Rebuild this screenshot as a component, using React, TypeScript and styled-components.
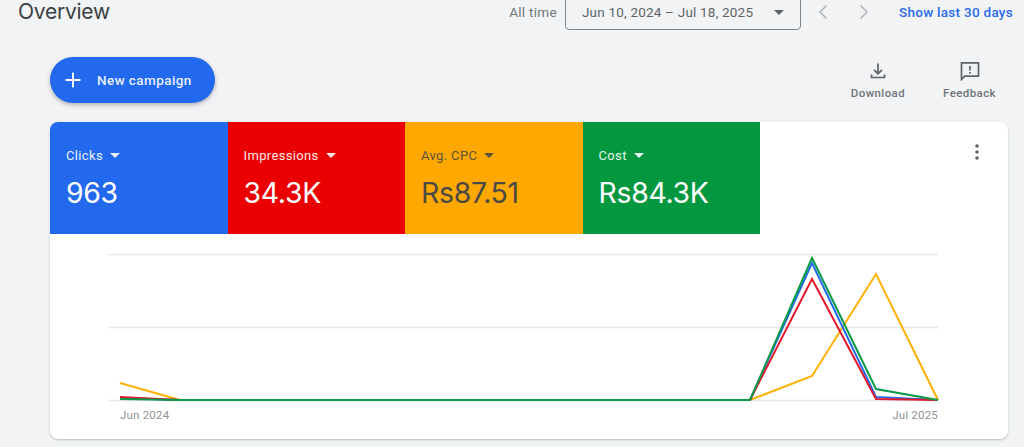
import React from "react";
import styled, { createGlobalStyle } from "styled-components";

const Global = createGlobalStyle`
  html, body { margin: 0; padding: 0; background: #f1f3f5; }
  body { width: 1024px; height: 447px; overflow: hidden; font-family: Roboto, "Liberation Sans", sans-serif; }
`;

const Page = styled.div`
  width: 1024px;
  height: 447px;
  overflow: hidden;
  background: #f1f3f5;
  display: flex;
  flex-direction: column;
`;

const TopBar = styled.header`
  display: flex;
  align-items: center;
  height: 24px;
  flex: none;
  padding: 0 11px 0 18px;
`;

const Title = styled.h1`
  margin: 0;
  flex: 1;
  font: 400 21px/24px Inter, Roboto, sans-serif;
  letter-spacing: -0.25px;
  color: #3c4043;
`;

const RangeLabel = styled.span`
  font-size: 13.5px;
  letter-spacing: 0.3px;
  color: #70757a;
  margin-right: 8px;
`;

const DateBox = styled.div`
  box-sizing: border-box;
  flex: none;
  width: 236px;
  height: 36px;
  border: 1px solid #80868b;
  border-radius: 4px;
  display: flex;
  align-items: center;
  justify-content: space-between;
  padding: 0 16px;
  font-size: 13.5px;
  letter-spacing: 0.2px;
  color: #5f6368;
`;

const Arrow = styled.span<{ $color: string }>`
  display: block;
  width: 0;
  height: 0;
  border-left: 5px solid transparent;
  border-right: 5px solid transparent;
  border-top: 5px solid ${(p) => p.$color};
`;

const Pager = styled.div`
  display: flex;
  gap: 23px;
  margin: 0 26px 0 13px;
  color: #b3b6ba;
`;

const LinkText = styled.a`
  font-size: 13.5px;
  font-weight: 500;
  letter-spacing: 0.28px;
  color: #2a6ae8;
`;

const ActionRow = styled.div`
  display: flex;
  flex: none;
  align-items: flex-start;
  padding: 33px 28px 0 50px;
  height: 65px;
`;

const NewButton = styled.button`
  display: flex;
  align-items: center;
  gap: 15px;
  width: 165px;
  height: 46px;
  border: 0;
  border-radius: 23px;
  padding: 0 0 0 14px;
  background: #2269ee;
  color: #e6eefd;
  font: 500 13.5px Roboto, sans-serif;
  letter-spacing: 0.42px;
  box-shadow: 0 2px 4px rgba(60, 64, 67, 0.35);
`;

const Tools = styled.div`
  margin-left: auto;
  display: flex;
  gap: 38px;
  margin-top: 4px;
`;

const Tool = styled.div`
  display: flex;
  flex-direction: column;
  align-items: center;
  gap: 5px;
  font-size: 11.5px;
  font-weight: 500;
  letter-spacing: 0.4px;
  color: #70757a;
`;

const Card = styled.section`
  margin-left: 50px;
  width: 958px;
  height: 317px;
  flex: none;
  background: #fff;
  border-radius: 8px;
  overflow: hidden;
  box-shadow: 0 1px 2px rgba(60, 64, 67, 0.3);
  position: relative;
`;

const Tiles = styled.div`
  display: flex;
  height: 112px;
`;

const Tile = styled.div<{ $bg: string; $fg: string }>`
  box-sizing: border-box;
  width: 177.5px;
  background: ${(p) => p.$bg};
  color: ${(p) => p.$fg};
  padding: 25px 16px 0;
`;

const TileLabel = styled.div`
  display: flex;
  align-items: center;
  gap: 7px;
  height: 16px;
  font-size: 13px;
  letter-spacing: 0.35px;
  opacity: 0.9;
`;

const TileValue = styled.div`
  margin-top: 13px;
  font: 400 28.4px Inter, Roboto, sans-serif;
  line-height: 34px;
  letter-spacing: -0.3px;
`;

const Kebab = styled.span`
  position: absolute;
  right: 29px;
  top: 22px;
  color: #5f6368;
  line-height: 0;
`;

const Plot = styled.svg`
  display: block;
  width: 958px;
  height: 205px;
`;

const AxisText = styled.text`
  font: 400 11.5px Roboto, sans-serif;
  letter-spacing: 0.2px;
  fill: #8f9397;
`;

const tiles = [
  { label: "Clicks", value: "963", bg: "#2269ee", fg: "#ffffff" },
  { label: "Impressions", value: "34.3K", bg: "#ea0000", fg: "#ffffff" },
  { label: "Avg. CPC", value: "Rs87.51", bg: "#ffa800", fg: "#4a4a45" },
  { label: "Cost", value: "Rs84.3K", bg: "#03973f", fg: "#ffffff" },
];

// page coordinates, shifted into the plot's own box
const line = (pts: [number, number][]) =>
  pts.map(([x, y]) => `${x - 50},${y - 234}`).join(" ");

const series = [
  { color: "#ffb000", pts: [[120, 383], [180, 400], [750, 400], [812, 376], [876, 274], [938, 400]] },
  { color: "#2269ee", pts: [[120, 398], [180, 400], [750, 400], [812, 263], [876, 397], [938, 400]] },
  { color: "#e01a2b", pts: [[120, 397], [180, 400], [750, 400], [812, 279], [876, 399], [938, 400]] },
  { color: "#0b9a4a", pts: [[120, 399], [180, 400], [750, 400], [812, 258], [876, 389], [938, 400]] },
] as { color: string; pts: [number, number][] }[];

export default function App() {
  return (
    <Page>
      <Global />
      <TopBar>
        <Title>Overview</Title>
        <RangeLabel>All time</RangeLabel>
        <DateBox>
          Jun 10, 2024 – Jul 18, 2025
          <Arrow $color="#5f6368" />
        </DateBox>
        <Pager>
          <svg width="18" height="18" viewBox="0 0 18 18" fill="none" stroke="currentColor" strokeWidth="1.6">
            <path d="M12.500 2.500 6 9l6.500 6.500" />
          </svg>
          <svg width="18" height="18" viewBox="0 0 18 18" fill="none" stroke="currentColor" strokeWidth="1.6">
            <path d="M5.500 2.500 12 9l-6.500 6.500" />
          </svg>
        </Pager>
        <LinkText>Show last 30 days</LinkText>
      </TopBar>
      <ActionRow>
        <NewButton>
          <svg width="18" height="18" viewBox="0 0 18 18" stroke="#fff" strokeWidth="1.8">
            <path d="M9 1.500v15M1.500 9h15" />
          </svg>
          New campaign
        </NewButton>
        <Tools>
          <Tool>
            <svg width="20" height="20" viewBox="0 0 20 20" fill="none" stroke="#5f6368" strokeWidth="1.7">
              <path d="M10 2.500v10M6 8.800l4 4 4-4M3.500 13.500v3h13v-3" />
            </svg>
            Download
          </Tool>
          <Tool>
            <svg width="20" height="20" viewBox="0 0 20 20" fill="none">
              <path d="M1.500 1.800h17v13.400H4.700l-3.200 3.200z" stroke="#5f6368" strokeWidth="1.7" />
              <path d="M10 5v4.500M10 11v1.700" stroke="#5f6368" strokeWidth="1.700" />
            </svg>
            Feedback
          </Tool>
        </Tools>
      </ActionRow>
      <Card>
        <Tiles>
          {tiles.map((t) => (
            <Tile key={t.label} $bg={t.bg} $fg={t.fg}>
              <TileLabel>
                {t.label}
                <Arrow $color={t.fg} />
              </TileLabel>
              <TileValue>{t.value}</TileValue>
            </Tile>
          ))}
        </Tiles>
        <Kebab>
          <svg width="4" height="16" viewBox="0 0 4 16" fill="currentColor">
            <circle cx="2" cy="2" r="1.800" />
            <circle cx="2" cy="8" r="1.800" />
            <circle cx="2" cy="14" r="1.800" />
          </svg>
        </Kebab>
        <Plot viewBox="0 0 958 205">
          {[20, 93, 166].map((y) => (
            <line key={y} x1="58" x2="888" y1={y + 0.5} y2={y + 0.5} stroke="#e6e7e9" strokeWidth="1.4" />
          ))}
          {series.map((s) => (
            <polyline key={s.color} points={line(s.pts)} fill="none" stroke={s.color} strokeWidth="2" strokeLinejoin="miter" />
          ))}
          <AxisText x="70" y="185">Jun 2024</AxisText>
          <AxisText x="888" y="185" textAnchor="end">Jul 2025</AxisText>
        </Plot>
      </Card>
    </Page>
  );
}
